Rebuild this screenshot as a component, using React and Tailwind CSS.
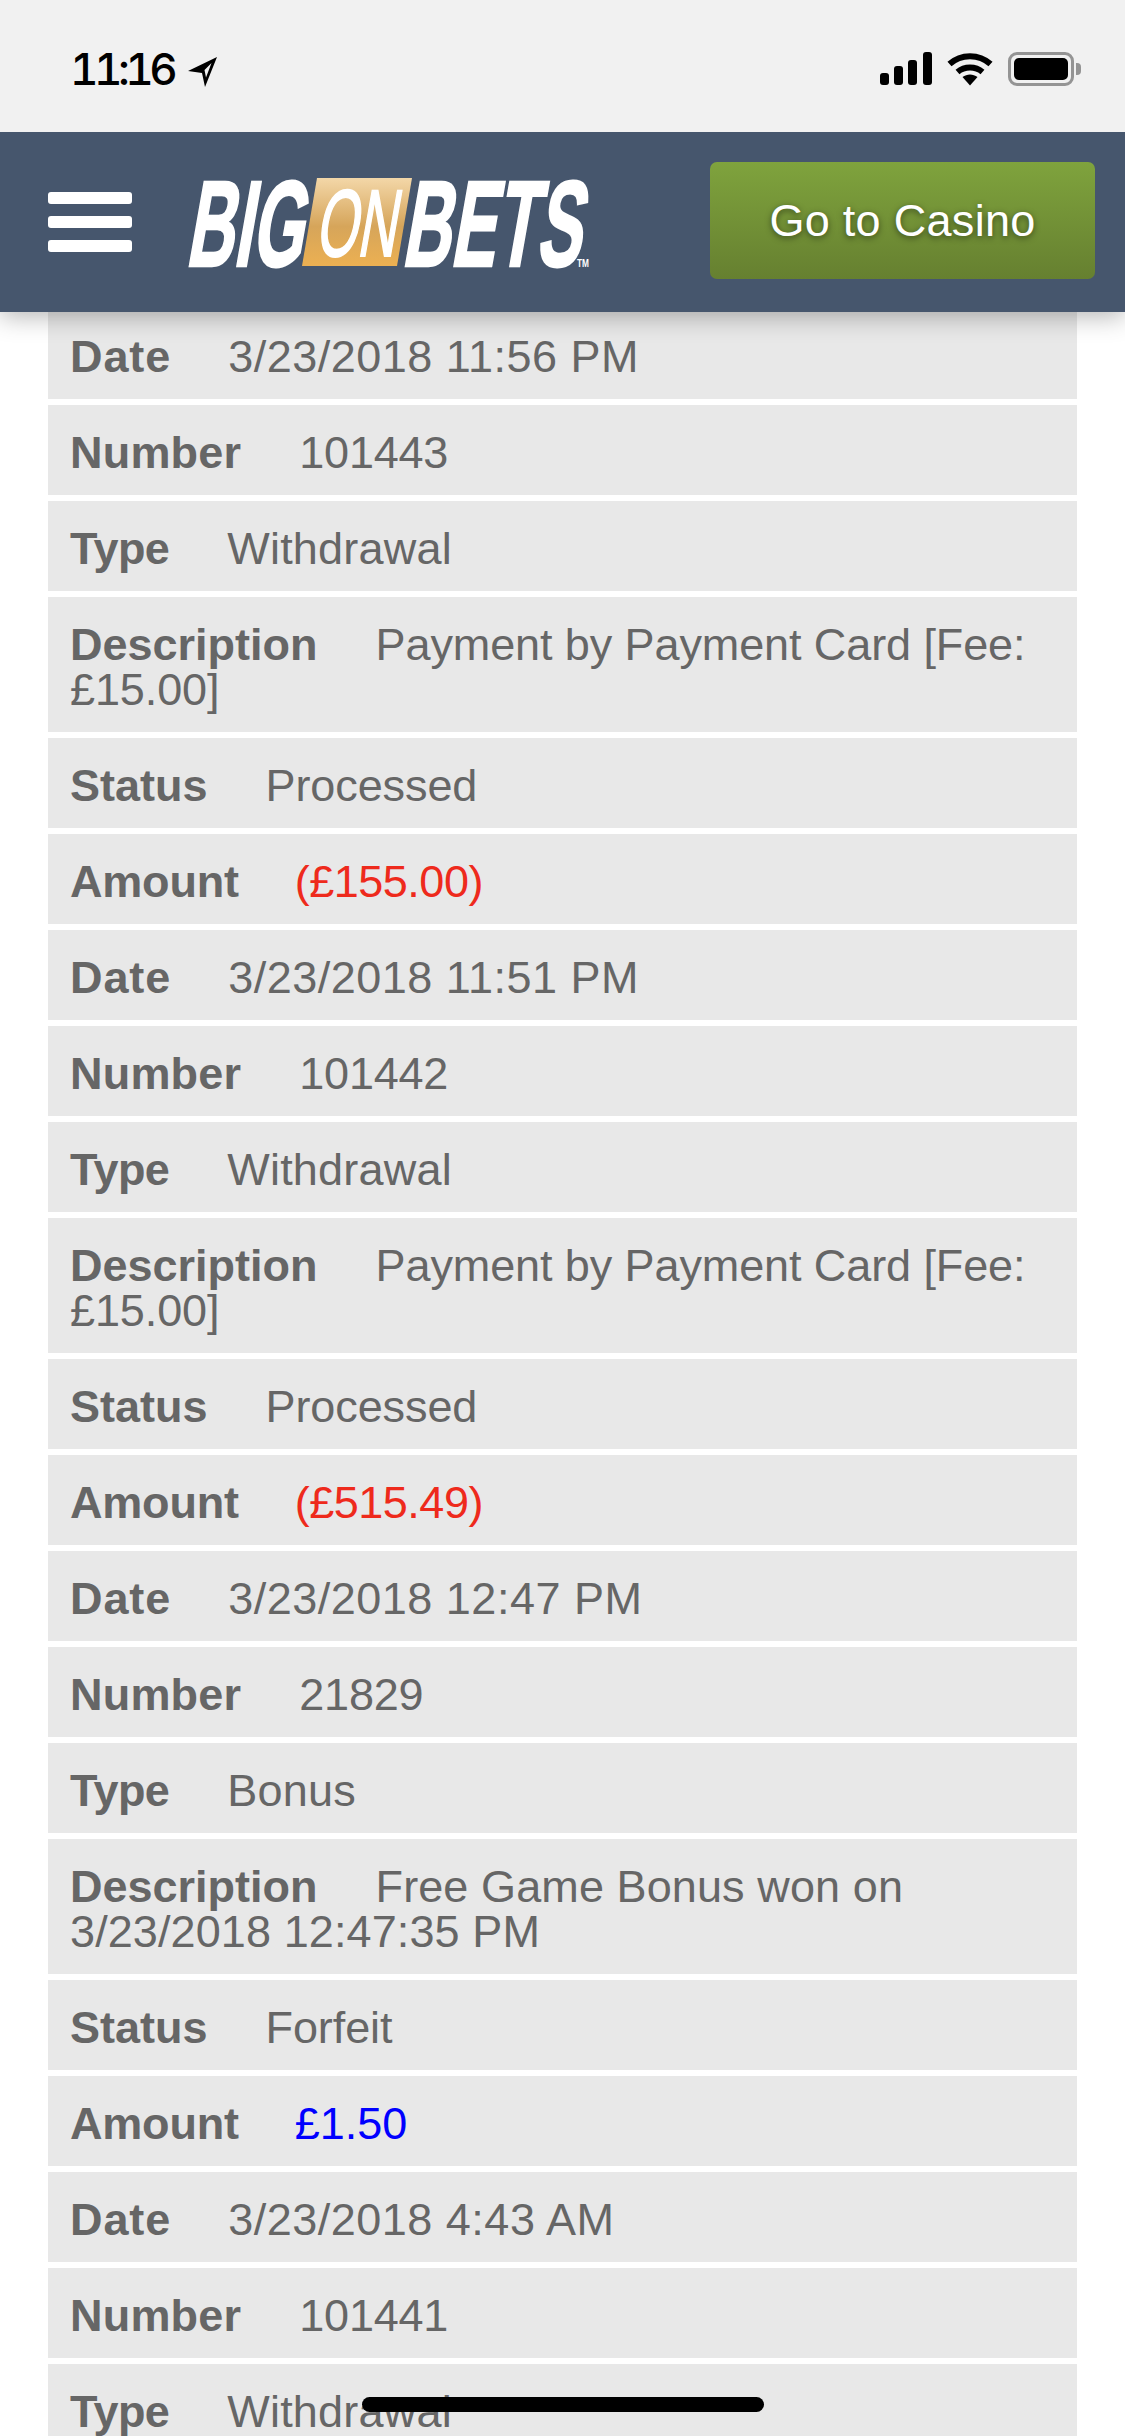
// label spacing differs per label, the value column is not aligned in the reference
const labelClass = {
  Date: 'pr-[57px] tracking-[0.9px]',
  Number: 'pr-[58px] tracking-[0.2px]',
  Type: 'pr-[58px] tracking-[-0.6px]',
  Description: 'pr-[58px]',
  Status: 'pr-[58px]',
  Amount: 'pr-[56px] tracking-[-0.2px]',
}

const dateText = 'tracking-[0.5px]'
const redText = 'text-[#ee2a1c] tracking-[-0.5px]'

const rows = [
  ['Date', '3/23/2018 11:56 PM', dateText],
  ['Number', '101443', 'tracking-[-0.2px]'],
  ['Type', 'Withdrawal', 'tracking-[0.2px]'],
  ['Description', 'Payment by Payment Card [Fee: £15.00]', 'tracking-[-0.1px]'],
  ['Status', 'Processed', 'tracking-[-0.1px]'],
  ['Amount', '(£155.00)', redText],
  ['Date', '3/23/2018 11:51 PM', dateText],
  ['Number', '101442', 'tracking-[-0.2px]'],
  ['Type', 'Withdrawal', 'tracking-[0.2px]'],
  ['Description', 'Payment by Payment Card [Fee: £15.00]', 'tracking-[-0.1px]'],
  ['Status', 'Processed', 'tracking-[-0.1px]'],
  ['Amount', '(£515.49)', redText],
  ['Date', '3/23/2018 12:47 PM', dateText],
  ['Number', '21829', 'tracking-[-0.2px]'],
  ['Type', 'Bonus', 'tracking-[0.2px]'],
  ['Description', 'Free Game Bonus won on 3/23/2018 12:47:35 PM', 'tracking-[0.1px]'],
  ['Status', 'Forfeit', 'tracking-[-0.1px]'],
  ['Amount', '£1.50', 'text-[#0000ff]'],
  ['Date', '3/23/2018 4:43 AM', dateText],
  ['Number', '101441', 'tracking-[-0.2px]'],
  ['Type', 'Withdrawal', 'tracking-[0.2px]'],
]

function StatusBar() {
  return (
    <div className="relative z-20 h-[132px] bg-[#f1f1f1] flex justify-between pl-[70px] pr-[44px] pt-[44px]">
      <div className="flex items-start">
        <span className="text-[44px] leading-[50px] font-medium text-black tabular-nums tracking-[-4.5px] font-['Inter',sans-serif]">11:16</span>
        <svg className="ml-[14px] mt-[12px]" width="31" height="32" viewBox="0 0 31 32">
          <path fillRule="evenodd" d="M30 1 L1 15 L15 17 L18 31 Z M24.5 7 L17.5 14 L19 21.5 Z" fill="#000" />
        </svg>
      </div>
      <div className="flex items-start pt-[8px]">
        <svg width="52" height="33" viewBox="0 0 52 33" fill="#000">
          <rect x="0" y="21" width="9" height="12" rx="3" />
          <rect x="14" y="14" width="9" height="19" rx="3" />
          <rect x="28" y="8" width="9" height="25" rx="3" />
          <rect x="43" y="0" width="9" height="33" rx="3" />
        </svg>
        <svg className="ml-[15px]" width="46" height="34" viewBox="0 0 46 34" fill="none">
          <path d="M2.5 12 C14 1.5 32 1.5 43.5 12" stroke="#000" strokeWidth="6" />
          <path d="M10.5 20 C17.5 14 28.5 14 35.5 20" stroke="#000" strokeWidth="6" />
          <path d="M15.5 25 C20 21.5 26 21.5 30.5 25 L23 33.5 Z" fill="#000" />
        </svg>
        <div className="ml-[15px] flex items-center">
          <div className="w-[66px] h-[34px] rounded-[9px] border-[3px] border-[#949494] p-[3px]">
            <div className="w-full h-full rounded-[5px] bg-black" />
          </div>
          <div className="w-[5px] h-[12px] rounded-r-[4px] bg-[#949494] ml-[2px]" />
        </div>
      </div>
    </div>
  )
}

function Logo() {
  return (
    <svg className="overflow-visible" width="402" height="92" viewBox="0 0 402 92">
      <defs>
        <linearGradient id="onGold" x1="0" y1="0" x2="0" y2="1">
          <stop offset="0" stopColor="#f3d7a8" />
          <stop offset="0.55" stopColor="#d6a55a" />
          <stop offset="1" stopColor="#ecb052" />
        </linearGradient>
      </defs>
      <path d="M128 1 L223 1 L208 89 L113 89 Z" fill="url(#onGold)" />
      <g transform="translate(0 89) skewX(-10)" fontFamily="'Liberation Sans', sans-serif" fill="#fff" stroke="#fff">
        <text x="-4" y="0" fontSize="122" fontWeight="700" strokeWidth="2.5" textLength="117" lengthAdjust="spacingAndGlyphs">BIG</text>
        <text x="124" y="-10" fontSize="95" strokeWidth="2" textLength="80" lengthAdjust="spacingAndGlyphs">ON</text>
        <text x="212" y="0" fontSize="122" fontWeight="700" strokeWidth="2.5" textLength="179" lengthAdjust="spacingAndGlyphs">BETS</text>
      </g>
      <text x="388" y="90" fontSize="10" fontWeight="700" fill="#fff" fontFamily="'Liberation Sans', sans-serif" textLength="12" lengthAdjust="spacingAndGlyphs">TM</text>
    </svg>
  )
}

function Header() {
  return (
    <div className="relative z-10 h-[180px] bg-[#46566d] flex items-center pl-[48px] pr-[30px] shadow-[0_4px_24px_rgba(0,0,0,0.3)]">
      <div className="w-[84px] flex flex-col gap-[12px] blur-[0.5px]">
        <div className="h-[12px] rounded-[3px] bg-white" />
        <div className="h-[12px] rounded-[3px] bg-white" />
        <div className="h-[12px] rounded-[3px] bg-white" />
      </div>
      <div className="ml-[57px] mt-[1px]">
        <Logo />
      </div>
      <button className="ml-auto -mt-[3px] w-[385px] h-[117px] rounded-[7px] bg-gradient-to-b from-[#7fa33d] to-[#668030] text-white text-[45px] tracking-[0.3px] [text-shadow:0_2px_6px_rgba(0,0,0,0.5)]">
        Go to Casino
      </button>
    </div>
  )
}

export default function App() {
  return (
    <div className="relative h-[2436px] overflow-hidden bg-white font-['Liberation_Sans',Arial,sans-serif]">
      <StatusBar />
      <Header />
      <div className="-mt-[3px] px-[48px] flex flex-col gap-[6px] w-[1125px]">
        {rows.map((row, i) => (
          <div key={i} className="bg-[#e8e8e8] pl-[22px] pr-[22px] pt-[24.5px] pb-[20.5px] text-[45px] leading-[45px] text-[#666666]">
            <span className={`font-bold ${labelClass[row[0]]}`}>{row[0]}</span>
            <span className={row[2]}>{row[1]}</span>
          </div>
        ))}
      </div>
      <div className="absolute left-[362px] top-[2397px] w-[402px] h-[15px] rounded-full bg-black" />
    </div>
  )
}
